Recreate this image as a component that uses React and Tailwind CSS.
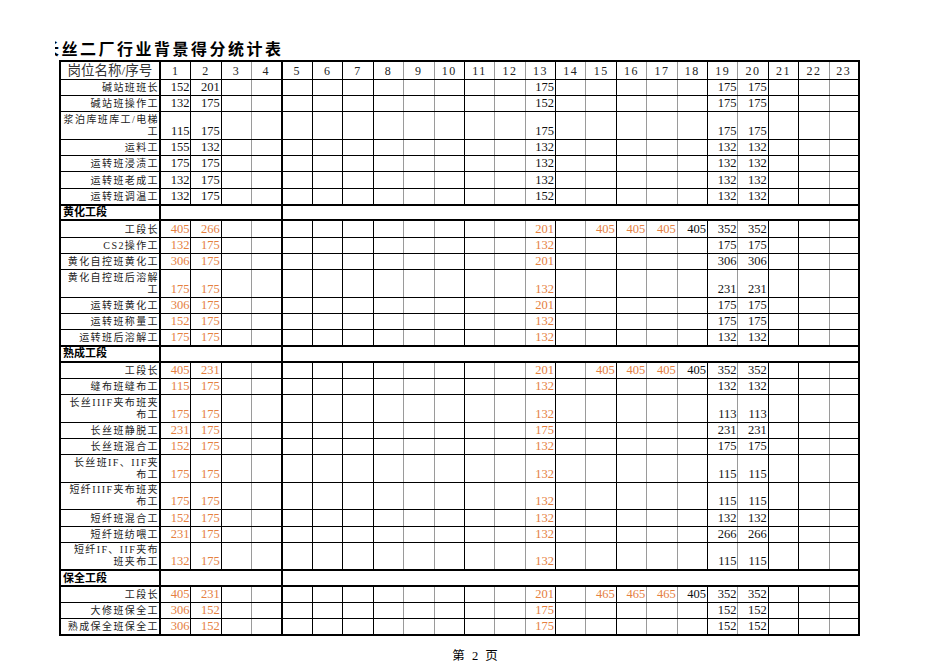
import React from "react";

// 每列右边框：黑 / 灰 / 粗
const colBorder = [
  "border-r border-black", // 1
  "border-r border-black", // 2
  "border-r border-[#9a9a9a]", // 3
  "border-r-2 border-black", // 4
  "border-r border-black", // 5
  "border-r border-black", // 6
  "border-r border-black", // 7
  "border-r border-[#9a9a9a]", // 8
  "border-r border-[#9a9a9a]", // 9
  "border-r border-black", // 10
  "border-r border-[#9a9a9a]", // 11
  "border-r border-[#9a9a9a]", // 12
  "border-r border-black", // 13
  "border-r border-[#9a9a9a]", // 14
  "border-r border-black", // 15
  "border-r border-[#9a9a9a]", // 16
  "border-r border-[#9a9a9a]", // 17
  "border-r border-black", // 18
  "border-r border-[#9a9a9a]", // 19
  "border-r border-black", // 20
  "border-r border-black", // 21
  "border-r border-[#9a9a9a]", // 22
  "border-r-2 border-black", // 23
];

const orangeCols = [1, 2, 13, 15, 16, 17];

const groups = [
  {
    title: null,
    orange: false,
    rows: [
      { name: ["碱站班班长"], v: { 1: 152, 2: 201, 13: 175, 19: 175, 20: 175 } },
      { name: ["碱站班操作工"], v: { 1: 132, 2: 175, 13: 152, 19: 175, 20: 175 } },
      { name: ["浆泊库班库工/电梯", "工"], v: { 1: 115, 2: 175, 13: 175, 19: 175, 20: 175 } },
      { name: ["运料工"], v: { 1: 155, 2: 132, 13: 132, 19: 132, 20: 132 } },
      { name: ["运转班浸渍工"], v: { 1: 175, 2: 175, 13: 132, 19: 132, 20: 132 } },
      { name: ["运转班老成工"], v: { 1: 132, 2: 175, 13: 132, 19: 132, 20: 132 } },
      { name: ["运转班调温工"], v: { 1: 132, 2: 175, 13: 152, 19: 132, 20: 132 } },
    ],
  },
  {
    title: "黄化工段",
    orange: true,
    rows: [
      { name: ["工段长"], v: { 1: 405, 2: 266, 13: 201, 15: 405, 16: 405, 17: 405, 18: 405, 19: 352, 20: 352 } },
      { name: ["CS2操作工"], v: { 1: 132, 2: 175, 13: 132, 19: 175, 20: 175 } },
      { name: ["黄化自控班黄化工"], v: { 1: 306, 2: 175, 13: 201, 19: 306, 20: 306 } },
      { name: ["黄化自控班后溶解", "工"], v: { 1: 175, 2: 175, 13: 132, 19: 231, 20: 231 } },
      { name: ["运转班黄化工"], v: { 1: 306, 2: 175, 13: 201, 19: 175, 20: 175 } },
      { name: ["运转班称量工"], v: { 1: 152, 2: 175, 13: 132, 19: 175, 20: 175 } },
      { name: ["运转班后溶解工"], v: { 1: 175, 2: 175, 13: 132, 19: 132, 20: 132 } },
    ],
  },
  {
    title: "熟成工段",
    orange: true,
    rows: [
      { name: ["工段长"], v: { 1: 405, 2: 231, 13: 201, 15: 405, 16: 405, 17: 405, 18: 405, 19: 352, 20: 352 } },
      { name: ["缝布班缝布工"], v: { 1: 115, 2: 175, 13: 132, 19: 132, 20: 132 } },
      { name: ["长丝IIIF夹布班夹", "布工"], v: { 1: 175, 2: 175, 13: 132, 19: 113, 20: 113 } },
      { name: ["长丝班静脱工"], v: { 1: 231, 2: 175, 13: 175, 19: 231, 20: 231 } },
      { name: ["长丝班混合工"], v: { 1: 152, 2: 175, 13: 132, 19: 175, 20: 175 } },
      { name: ["长丝班IF、IIF夹", "布工"], v: { 1: 175, 2: 175, 13: 132, 19: 115, 20: 115 } },
      { name: ["短纤IIIF夹布班夹", "布工"], v: { 1: 175, 2: 175, 13: 132, 19: 115, 20: 115 } },
      { name: ["短纤班混合工"], v: { 1: 152, 2: 175, 13: 132, 19: 132, 20: 132 } },
      { name: ["短纤班纺喂工"], v: { 1: 231, 2: 175, 13: 132, 19: 266, 20: 266 } },
      { name: ["短纤IF、IIF夹布", "班夹布工"], v: { 1: 132, 2: 175, 13: 132, 19: 115, 20: 115 } },
    ],
  },
  {
    title: "保全工段",
    orange: true,
    rows: [
      { name: ["工段长"], v: { 1: 405, 2: 231, 13: 201, 15: 465, 16: 465, 17: 465, 18: 405, 19: 352, 20: 352 } },
      { name: ["大修班保全工"], v: { 1: 306, 2: 152, 13: 175, 19: 152, 20: 152 } },
      { name: ["熟成保全班保全工"], v: { 1: 306, 2: 152, 13: 175, 19: 152, 20: 152 } },
    ],
  },
];

const cols = Array.from({ length: 23 }, (_, i) => i + 1);
const grid = "grid grid-cols-[100px_repeat(23,minmax(0,1fr))]";

const HeaderRow = () => (
  <div className={`${grid} h-[18px] border-b border-black`}>
    <div className="border-r-2 border-black flex items-center justify-center text-[13.5px] leading-none text-[#333]">
      岗位名称/序号
    </div>
    {cols.map((c) => (
      <div
        key={c}
        className={`${colBorder[c - 1]} flex items-center justify-center text-[12px] leading-none tracking-[1.5px] text-[#222]`}
      >
        {c}
      </div>
    ))}
  </div>
);

const SectionRow = ({ title }) => (
  <div className={`${grid} h-[16.7px] border-t border-b-2 border-black`}>
    <div className="border-r-2 border-black flex items-center pl-[2px] text-[11px] font-bold leading-none">
      {title}
    </div>
    <div className="col-span-4 border-r-2 border-black"></div>
    <div className="col-span-19 border-r-2 border-black"></div>
  </div>
);

const DataRow = ({ row, orange, last }) => {
  const tall = row.name.length > 1;
  return (
    <div
      className={`${grid} ${tall ? "h-[27.6px]" : "h-[16.2px]"} ${
        last ? "border-b-2" : "border-b"
      } border-black`}
    >
      <div className="border-r-2 border-black flex flex-col items-end justify-end pb-[1px] text-[10px] leading-[12px] tracking-[1.4px] text-[#222] overflow-hidden whitespace-nowrap">
        {row.name.map((l, i) => (
          <span key={i}>{l}</span>
        ))}
      </div>
      {cols.map((c) => {
        const val = row.v[c];
        const isOrange = orange && orangeCols.includes(c);
        return (
          <div
            key={c}
            className={`${colBorder[c - 1]} flex items-end justify-end pr-[1px] pb-[1px] text-[12.5px] leading-[13px] ${
              isOrange ? "text-[#e5803f]" : "text-[#111]"
            }`}
          >
            {val ?? ""}
          </div>
        );
      })}
    </div>
  );
};

export default function App() {
  const font = { fontFamily: '"Liberation Serif", "Noto Sans CJK SC", serif' };
  return (
    <div className="w-[950px] h-[672px] bg-white text-black overflow-hidden" style={font}>
      <div className="pt-[38px]">
        <div className="ml-[55px] w-[300px] h-[20px] overflow-hidden">
          <div
            className="-ml-[12px] whitespace-nowrap text-[16px] leading-[20px] font-bold tracking-[2.5px]"
            style={{ fontFamily: '"Noto Sans CJK SC", sans-serif' }}
          >
            长丝二厂行业背景得分统计表
          </div>
        </div>
        <div className="ml-[59px] mt-[2px] w-[801px] border-l-2 border-t-2 border-black">
          <HeaderRow />
          {groups.map((g, gi) => (
            <React.Fragment key={gi}>
              {g.title && <SectionRow title={g.title} />}
              {g.rows.map((r, ri) => (
                <DataRow
                  key={ri}
                  row={r}
                  orange={g.orange}
                  last={gi === groups.length - 1 && ri === g.rows.length - 1}
                />
              ))}
            </React.Fragment>
          ))}
        </div>
        <div className="mt-[12px] flex justify-center gap-[7px] text-[12.5px] leading-[16px]">
          <span>第</span>
          <span>2</span>
          <span>页</span>
        </div>
      </div>
    </div>
  );
}
